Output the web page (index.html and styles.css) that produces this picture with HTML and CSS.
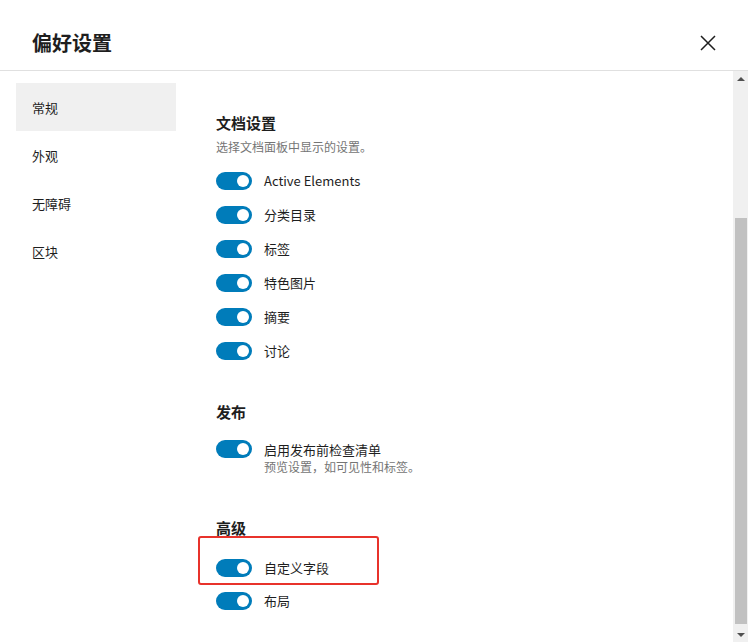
FILE: index.html
```html
<!DOCTYPE html>
<html lang="zh-CN">
<head>
<meta charset="utf-8">
<title>偏好设置</title>
<link rel="stylesheet" href="styles.css">
</head>
<body>
<div class="modal">
  <header class="head">
    <h1 class="title">偏好设置</h1>
    <button class="close" aria-label="关闭">
      <svg width="16" height="16" viewBox="0 0 16 16"><path d="M1 1 L15 15 M15 1 L1 15" stroke="#1e1e1e" stroke-width="1.5" fill="none"/></svg>
    </button>
  </header>
  <div class="body">
    <nav class="tabs">
      <div class="tab active">常规</div>
      <div class="tab">外观</div>
      <div class="tab">无障碍</div>
      <div class="tab">区块</div>
    </nav>
    <main class="panel">
      <section class="section">
        <h2 class="sec-title">文档设置</h2>
        <p class="sec-desc">选择文档面板中显示的设置。</p>
        <div class="rows">
          <div class="row"><span class="toggle"><span class="knob"></span></span><span class="label">Active Elements</span></div>
          <div class="row"><span class="toggle"><span class="knob"></span></span><span class="label">分类目录</span></div>
          <div class="row"><span class="toggle"><span class="knob"></span></span><span class="label">标签</span></div>
          <div class="row"><span class="toggle"><span class="knob"></span></span><span class="label">特色图片</span></div>
          <div class="row"><span class="toggle"><span class="knob"></span></span><span class="label">摘要</span></div>
          <div class="row"><span class="toggle"><span class="knob"></span></span><span class="label">讨论</span></div>
        </div>
      </section>
      <section class="section publish">
        <h2 class="sec-title">发布</h2>
        <div class="row tall">
          <span class="toggle"><span class="knob"></span></span>
          <div class="label-block">
            <span class="label">启用发布前检查清单</span>
            <span class="help">预览设置，如可见性和标签。</span>
          </div>
        </div>
      </section>
      <section class="section advanced">
        <h2 class="sec-title">高级</h2>
        <div class="highlight">
          <div class="row"><span class="toggle"><span class="knob"></span></span><span class="label">自定义字段</span></div>
        </div>
        <div class="row after"><span class="toggle"><span class="knob"></span></span><span class="label">布局</span></div>
      </section>
    </main>
    <div class="scrollbar">
      <div class="sb-btn"><span class="arrow up"></span></div>
      <div class="sb-space"></div>
      <div class="sb-thumb"></div>
      <div class="sb-end"></div>
      <div class="sb-btn"><span class="arrow down"></span></div>
    </div>
  </div>
</div>
</body>
</html>
```
FILE: styles.css
```css
* { box-sizing: border-box; }
html, body { margin: 0; padding: 0; background: #fff; }
body {
  font-family: "Noto Sans CJK SC", "Noto Sans", sans-serif;
  color: #1e1e1e;
}
.modal {
  width: 748px;
  height: 642px;
  display: flex;
  flex-direction: column;
  overflow: hidden;
}
.head {
  height: 71px;
  flex: none;
  border-bottom: 1px solid #e0e0e0;
  padding: 16px 32px 0 32px;
  display: flex;
  align-items: center;
  justify-content: space-between;
}
.title {
  margin: 0;
  font-size: 20px;
  line-height: 28px;
  font-weight: 700;
  color: #1e1e1e;
}
.close {
  width: 24px;
  height: 24px;
  padding: 0;
  border: 0;
  background: none;
  display: flex;
  align-items: center;
  justify-content: flex-end;
}
.close svg { display: block; }
.body {
  flex: 1;
  display: flex;
  min-height: 0;
}
.tabs {
  width: 160px;
  margin-left: 16px;
  padding-top: 12px;
  flex: none;
}
.tab {
  height: 48px;
  padding-left: 16px;
  display: flex;
  align-items: center;
  font-size: 13px;
  color: #1e1e1e;
}
.tab.active { background: #f0f0f0; }
.panel {
  flex: 1;
  padding: 42px 0 0 40px;
}
.section { margin: 0; }
.sec-title {
  margin: 0;
  font-size: 15px;
  line-height: 20px;
  font-weight: 700;
  color: #1e1e1e;
}
.sec-desc {
  margin: 5px 0 16px;
  font-size: 12px;
  line-height: 18px;
  color: #757575;
}
.rows {
  display: flex;
  flex-direction: column;
  gap: 16px;
}
.row {
  display: flex;
  align-items: center;
  gap: 12px;
  height: 18px;
}
.row.tall {
  height: auto;
  align-items: flex-start;
  margin-top: 18px;
}
.toggle {
  width: 36px;
  height: 18px;
  border-radius: 9px;
  background: #007cba;
  display: flex;
  align-items: center;
  justify-content: flex-end;
  padding-right: 3px;
  flex: none;
}
.knob {
  width: 12px;
  height: 12px;
  border-radius: 50%;
  background: #fff;
}
.label {
  font-size: 13px;
  line-height: 18px;
  color: #1e1e1e;
}
.label-block {
  display: flex;
  flex-direction: column;
  margin-top: 1px;
}
.help {
  font-size: 12px;
  line-height: 16px;
  color: #757575;
}
.publish { margin-top: 42px; }
.advanced { margin-top: 43px; }
.highlight {
  width: 181px;
  margin: -2px 0 0 -18px;
  padding: 21px 0 6px 16px;
  border: 2px solid #e8322b;
  border-radius: 3px;
}
.row.after { margin-top: 7px; }
.scrollbar {
  width: 15px;
  flex: none;
  background: #f0f0f0;
  display: flex;
  flex-direction: column;
}
.sb-btn {
  height: 15px;
  flex: none;
  display: flex;
  align-items: center;
  justify-content: center;
}
.arrow {
  width: 0;
  height: 0;
  border-left: 4px solid transparent;
  border-right: 4px solid transparent;
}
.arrow.up { border-bottom: 4px solid #505050; }
.arrow.down { border-top: 4px solid #505050; }
.sb-space { height: 132px; flex: none; }
.sb-thumb {
  height: 406px;
  flex: none;
  margin: 0 1px 0 2px;
  background: #c1c1c1;
}
.sb-end { flex: 1; }
```
